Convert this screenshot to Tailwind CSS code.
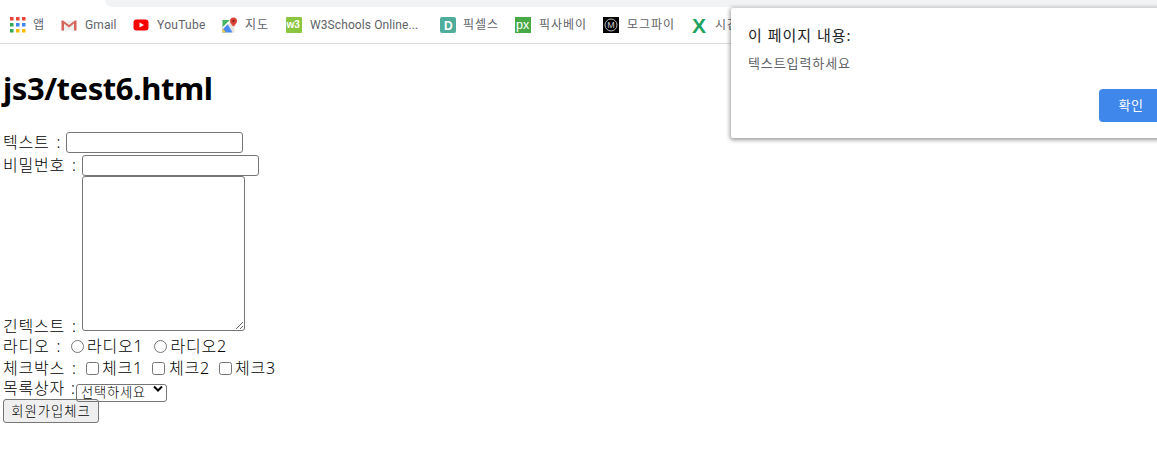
<!DOCTYPE html>
<html lang="ko">
<head>
  <meta charset="UTF-8" />
  <title>js3/test6.html</title>
  <script src="https://cdn.jsdelivr.net/npm/@tailwindcss/browser@4"></script>
</head>
<body class="relative h-[473px] w-[1157px] overflow-hidden bg-white font-['Noto_Sans','Noto_Sans_CJK_KR',sans-serif] text-black">

  <!-- browser chrome -->
  <div class="h-[7px] pl-[105px]"><div class="h-full rounded-bl-xl bg-[#f1f3f4]"></div></div>
  <nav class="flex h-[37px] items-center gap-[17px] whitespace-nowrap border-b border-[#dadce0] pl-[10px] text-xs text-[#5f6368] font-['Roboto','Noto_Sans_CJK_KR',sans-serif]">
    <a class="flex w-[34px] items-center gap-[7px]">
      <svg class="size-4 shrink-0" viewBox="0 0 16 16"><rect x="0" y="0" width="3.500" height="3.500" fill="#ea4335"/><rect x="6" y="0" width="3.500" height="3.500" fill="#ea4335"/><rect x="12" y="0" width="3.500" height="3.500" fill="#ea4335"/><rect x="0" y="6" width="3.500" height="3.500" fill="#34a853"/><rect x="6" y="6" width="3.500" height="3.500" fill="#4285f4"/><rect x="12" y="6" width="3.500" height="3.500" fill="#4285f4"/><rect x="0" y="12" width="3.500" height="3.500" fill="#34a853"/><rect x="6" y="12" width="3.500" height="3.500" fill="#fbbc05"/><rect x="12" y="12" width="3.500" height="3.500" fill="#fbbc05"/></svg>
      <span>앱</span>
    </a>
    <a class="flex w-[55px] items-center gap-2">
      <svg class="size-4 shrink-0" viewBox="0 0 16 16"><path d="M0.500 3.500h15V13.500h-15z" fill="#eeeeee"/><path d="M0.500 3.500V13.500h2.500V6.500L8 10.500l5-4V13.500h2.500V3.500h-1.500L8 8 2 3.500z" fill="#d6655c"/></svg>
      <span class="tracking-[0.1px]">Gmail</span>
    </a>
    <a class="flex w-[72px] items-center gap-2">
      <svg class="size-4 shrink-0" viewBox="0 0 16 16"><rect x="0.500" y="2.500" width="15" height="11" rx="3" fill="#f00"/><path d="M6.500 5.500v5L11 8z" fill="#fff"/></svg>
      <span class="tracking-[0.3px]">YouTube</span>
    </a>
    <a class="flex w-[47px] items-center gap-[7px]">
      <svg class="size-4 shrink-0" viewBox="0 0 16 16"><rect x="0.500" y="3" width="12" height="12.500" fill="#e8e4dc"/><path d="M0.500 3h7.500L0.500 10.500z" fill="#48b564"/><path d="M0.500 15.500V10.500L5.500 7l5 8.500z" fill="#4a8af4"/><path d="M0.500 15.500V11l3.500 4.500z" fill="#fcc934"/><path d="M0.500 10.500L8 3h2L0.500 12.500z" fill="#fff"/><path d="M11.500 0.500a3.500 3.500 0 0 1 3.500 3.500c0 2.500-3.500 5.500-3.500 5.500S8 6.500 8 4a3.500 3.500 0 0 1 3.500-3.500z" fill="#db4437"/><circle cx="11.500" cy="4" r="1.200" fill="#8a1f17"/></svg>
      <span class="tracking-[1px]">지도</span>
    </a>
    <a class="flex w-[137px] items-center gap-2">
      <svg class="size-4 shrink-0" viewBox="0 0 16 16"><rect width="16" height="16" rx="1" fill="#8cc63f"/><text x="0.500" y="11" fill="#fff" font-family="Liberation Sans" font-size="10" font-weight="700">w3</text></svg>
      <span class="tracking-[0.1px]">W3Schools Online...</span>
    </a>
    <a class="flex w-[58px] items-center gap-[7px]">
      <svg class="size-4 shrink-0" viewBox="0 0 16 16"><rect width="16" height="16" rx="2" fill="#4fae9b"/><text x="4" y="12.500" fill="#fff" font-family="Liberation Sans" font-size="12" font-weight="700">D</text></svg>
      <span class="tracking-[1px]">픽셀스</span>
    </a>
    <a class="flex w-[71px] items-center gap-2">
      <svg class="size-4 shrink-0" viewBox="0 0 16 16"><rect width="16" height="16" fill="#48a947"/><text x="1" y="11.500" fill="#fff" font-family="Liberation Sans" font-size="12.500">px</text></svg>
      <span class="tracking-[1px]">픽사베이</span>
    </a>
    <a class="flex w-[71px] items-center gap-2">
      <svg class="size-4 shrink-0" viewBox="0 0 16 16"><rect width="16" height="16" fill="#000"/><circle cx="8" cy="8" r="6" fill="none" stroke="#bbb" stroke-width="1"/><text x="8" y="11" fill="#ccc" text-anchor="middle" font-family="Liberation Sans" font-size="9">M</text></svg>
      <span class="tracking-[1px]">모그파이</span>
    </a>
    <a class="flex items-center gap-2">
      <svg class="size-4 shrink-0 overflow-visible" viewBox="0 0 16 16"><text x="8" y="15.500" fill="#1da462" text-anchor="middle" font-family="Liberation Sans" font-size="21" font-weight="700">X</text></svg>
      <span class="tracking-[1px]">시간표</span>
    </a>
  </nav>

  <!-- page -->
  <main class="pl-[3px]">
    <h1 class="mt-[22px] h-[44px] text-[31px] leading-[44px] font-bold tracking-[-0.45px]">js3/test6.html</h1>
    <form class="mt-[22px] text-base font-light tracking-[0.8px]">
      <div class="flex h-[23px] items-start">
        <label class="w-[63px] whitespace-nowrap leading-[21px] [word-spacing:2px]">텍스트 :</label>
        <input type="text" class="h-[21px] w-[177px] rounded-[3px] border border-[#767676]" />
      </div>
      <div class="flex h-[21px] items-start">
        <label class="w-[79px] whitespace-nowrap leading-[21px] [word-spacing:2px]">비밀번호 :</label>
        <input type="password" class="h-[21px] w-[177px] rounded-[3px] border border-[#767676]" />
      </div>
      <div class="flex h-[159px] items-start">
        <label class="mb-[-3px] w-[79px] self-end whitespace-nowrap leading-[23px] [word-spacing:2px]">긴텍스트 :</label>
        <textarea class="h-[155px] w-[163px] rounded-[3px] border border-[#767676]"></textarea>
      </div>
      <div class="flex h-[22px] items-center">
        <label class="w-[68px] whitespace-nowrap [word-spacing:2px]">라디오 :</label>
        <input type="radio" name="r" class="m-0 size-[13px]" />
        <span class="ml-[3px]">라디오1</span>
        <input type="radio" name="r" class="ml-[10px] size-[13px]" />
        <span class="ml-[4px]">라디오2</span>
      </div>
      <div class="flex h-[22px] items-center">
        <label class="w-[83px] whitespace-nowrap [word-spacing:2px]">체크박스 :</label>
        <input type="checkbox" class="m-0 size-[13px]" />
        <span class="ml-[3px]">체크1</span>
        <input type="checkbox" class="ml-[9px] size-[13px]" />
        <span class="ml-[4px]">체크2</span>
        <input type="checkbox" class="ml-[9px] size-[13px]" />
        <span class="ml-[3px]">체크3</span>
      </div>
      <div class="flex h-[20px] items-start">
        <label class="w-[73px] whitespace-nowrap leading-[19px] [word-spacing:1px]">목록상자 :</label>
        <div class="relative h-[18px] w-[91px]">
          <select class="h-[18px] w-[91px] appearance-none rounded-[3px] border border-[#767676] pl-[4px] text-[13.333px] leading-none tracking-[0.7px]">
            <option>선택하세요</option>
          </select>
          <svg class="pointer-events-none absolute top-[6px] left-[77px] h-[7px] w-[10px]" viewBox="0 0 10 7"><path d="M1 1.500l4 4 4-4" fill="none" stroke="#000" stroke-width="2"/></svg>
        </div>
      </div>
      <button type="button" class="block h-[24px] w-[96px] rounded-[3px] border border-[#767676] bg-[#efefef] pt-[2px] text-[13.333px] leading-none tracking-[1px]">회원가입체크</button>
    </form>
  </main>

  <!-- alert dialog -->
  <div class="absolute top-[8px] left-[731px] h-[130px] w-[440px] rounded-[2px] bg-white pt-[16px] pl-[17px] shadow-[0_1px_4px_1px_rgba(0,0,0,0.4)]">
    <p class="text-[15px] leading-[22px] tracking-[1px] text-[#202124]">이 페이지 내용:</p>
    <p class="mt-[7px] text-[13px] leading-[20px] tracking-[0.9px] text-[#5f6368]">텍스트입력하세요</p>
    <button class="absolute top-[81px] left-[368px] h-[33px] w-[64px] rounded-[4px] bg-[#4087eb] text-[13px] tracking-[0.5px] text-white">확인</button>
  </div>
</body>
</html>
